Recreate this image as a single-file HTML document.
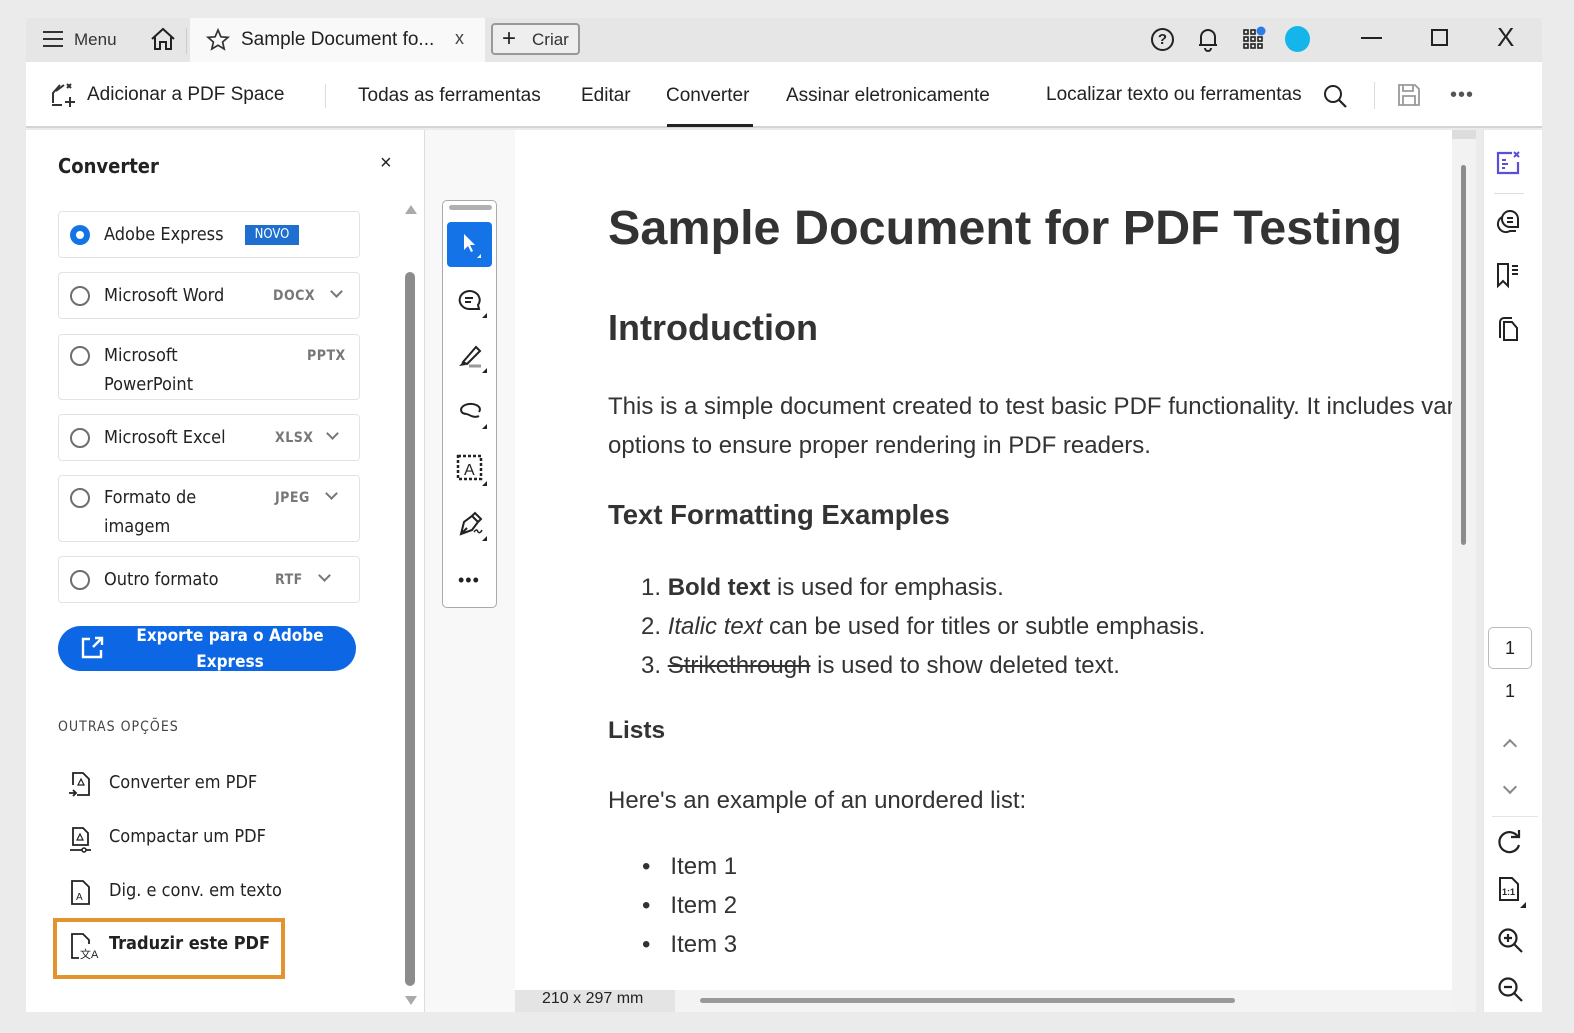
<!DOCTYPE html>
<html><head><meta charset="utf-8">
<style>
*{margin:0;padding:0;box-sizing:border-box}
body{width:1574px;height:1033px;background:#ebebeb;position:relative;overflow:hidden;font-family:"Liberation Sans",sans-serif;color:#222}
.a{position:absolute}
.t{white-space:nowrap}
.ui{font-family:"DejaVu Sans Condensed","Liberation Sans",sans-serif}
.opt{position:absolute;left:58px;width:302px;border:1px solid #e3e3e3;border-radius:4px;background:#fff}
.rad{position:absolute;left:11px;width:20px;height:20px;border:2px solid #6e6e6e;border-radius:50%}
.ol{position:absolute;left:45px;font-size:18px;color:#222;line-height:29px}
.fmt{position:absolute;font-size:14px;color:#777;font-weight:bold;letter-spacing:.5px}
.chev{position:absolute;width:9px;height:9px;border-right:2px solid #777;border-bottom:2px solid #777;transform:rotate(45deg)}
.doc{font-family:"Liberation Sans",sans-serif;color:#333}
svg{position:absolute;overflow:visible}
</style></head><body>
<!-- title bar -->
<div class="a" style="left:26px;top:18px;width:1516px;height:44px;background:#e6e6e6"></div>
<div class="a" style="left:190px;top:18px;width:295px;height:44px;background:#f9f9f9"></div>
<div class="a" style="left:26px;top:62px;width:1516px;height:66px;background:#fff;border-bottom:2px solid #d4d4d4"></div>
<!-- menu -->
<div class="a" style="left:43px;top:31px;width:20px;height:2px;background:#333;box-shadow:0 7px 0 #333,0 14px 0 #333"></div>
<div class="a t" style="left:74px;top:30px;font-size:17px;color:#333">Menu</div>
<svg style="left:150px;top:27px" width="26" height="24" viewBox="0 0 26 24"><path d="M2 12 L13 2 L24 12 M5 10 V22 H10 V15 H16 V22 H21 V10" fill="none" stroke="#222" stroke-width="2"/></svg>
<div class="a" style="left:186px;top:28px;width:1px;height:26px;background:#ccc"></div>
<svg style="left:206px;top:28px" width="24" height="24" viewBox="0 0 24 24"><path d="M12 2 L14.9 8.8 22 9.3 16.6 14 18.2 21 12 17.3 5.8 21 7.4 14 2 9.3 9.1 8.8Z" fill="none" stroke="#333" stroke-width="1.7"/></svg>
<div class="a t" style="left:241px;top:29px;font-size:19px;color:#222">Sample Document fo...</div>
<div class="a t" style="left:455px;top:28px;font-size:18px;color:#444">x</div>
<div class="a" style="left:491px;top:23px;width:89px;height:32px;border:2px solid #999;border-radius:4px;background:#eee"></div>
<div class="a t" style="left:502px;top:25px;font-size:24px;color:#222">+</div>
<div class="a t" style="left:532px;top:30px;font-size:17px;color:#333">Criar</div>
<!-- right title icons -->
<div class="a" style="left:1151px;top:28px;width:23px;height:23px;border:2px solid #222;border-radius:50%;font-size:15px;font-weight:bold;text-align:center;line-height:19px">?</div>
<svg style="left:1197px;top:26px" width="22" height="26" viewBox="0 0 22 26"><path d="M4 19 V11 a7 7 0 0 1 14 0 V19 H2 H20 M8 22 a3 3 0 0 0 6 0" fill="none" stroke="#222" stroke-width="2"/></svg>
<svg style="left:1243px;top:27px" width="24" height="24" viewBox="0 0 24 24"><g fill="none" stroke="#222" stroke-width="1.6"><rect x="1" y="3" width="4" height="4"/><rect x="8" y="3" width="4" height="4"/><rect x="1" y="10" width="4" height="4"/><rect x="8" y="10" width="4" height="4"/><rect x="15" y="10" width="4" height="4"/><rect x="1" y="17" width="4" height="4"/><rect x="8" y="17" width="4" height="4"/><rect x="15" y="17" width="4" height="4"/></g><circle cx="18" cy="4" r="4.5" fill="#2d7be5"/></svg>
<div class="a" style="left:1285px;top:26px;width:25px;height:26px;border-radius:50%;background:#14b5ea"></div>
<div class="a" style="left:1361px;top:37px;width:21px;height:2px;background:#222"></div>
<div class="a" style="left:1431px;top:29px;width:17px;height:17px;border:2px solid #222"></div>
<div class="a t" style="left:1497px;top:22px;font-size:26px;color:#222">X</div>
<!-- toolbar -->
<svg style="left:50px;top:81px" width="28" height="28" viewBox="0 0 28 28"><path d="M3 22 V12 L10 4 M6 10 L14 4 M2 24 H12" fill="none" stroke="#333" stroke-width="2"/><path d="M17 3 l4 4 M21 3 l-4 4 M20 16 v10 M15 21 h10" stroke="#333" stroke-width="2"/></svg>
<div class="a t" style="left:87px;top:84px;font-size:19px;color:#222">Adicionar a PDF Space</div>
<div class="a" style="left:325px;top:84px;width:1px;height:24px;background:#ddd"></div>
<div class="a t" style="left:358px;top:85px;font-size:19px;color:#222">Todas as ferramentas</div>
<div class="a t" style="left:581px;top:85px;font-size:19px;color:#222">Editar</div>
<div class="a t" style="left:666px;top:85px;font-size:19px;color:#222">Converter</div>
<div class="a" style="left:667px;top:124px;width:86px;height:3px;background:#222"></div>
<div class="a t" style="left:786px;top:85px;font-size:19px;color:#222">Assinar eletronicamente</div>
<div class="a t" style="left:1046px;top:84px;font-size:19px;color:#222">Localizar texto ou ferramentas</div>
<svg style="left:1323px;top:84px" width="24" height="24" viewBox="0 0 24 24"><circle cx="10" cy="10" r="8" fill="none" stroke="#222" stroke-width="2"/><path d="M16 16 L23 23" stroke="#222" stroke-width="2.2"/></svg>
<div class="a" style="left:1374px;top:82px;width:1px;height:27px;background:#ddd"></div>
<svg style="left:1397px;top:83px" width="24" height="24" viewBox="0 0 24 24"><path d="M2 2 H18 L22 6 V22 H2Z M6 2 V8 H16 V2 M6 22 V13 H18 V22" fill="none" stroke="#999" stroke-width="1.8"/></svg>
<div class="a t" style="left:1450px;top:84px;font-size:20px;color:#555;letter-spacing:1px">•••</div>
<!-- left panel -->
<div class="a" style="left:26px;top:130px;width:398px;height:882px;background:#fff"></div>
<div class="a" style="left:424px;top:130px;width:1px;height:882px;background:#ddd"></div>
<div class="a t ui" style="left:58px;top:154px;font-size:20px;font-weight:bold;color:#222">Converter</div>
<div class="a t" style="left:380px;top:152px;font-size:20px;color:#222">×</div>
<div class="opt" style="top:211px;height:47px"><div class="a" style="left:11px;top:13px;width:20px;height:20px;border-radius:50%;background:#1473e6"><div class="a" style="left:6px;top:6px;width:8px;height:8px;border-radius:50%;background:#fff"></div></div><div class="ol ui" style="top:8px">Adobe Express</div><div class="a ui" style="left:186px;top:13px;width:54px;height:20px;background:#1e6fd0;color:#fff;font-size:13px;text-align:center;line-height:20px">NOVO</div></div>
<div class="opt" style="top:272px;height:47px"><div class="rad" style="top:13px"></div><div class="ol ui" style="top:8px">Microsoft Word</div><div class="fmt ui" style="left:214px;top:15px">DOCX</div><div class="chev" style="left:273px;top:14px"></div></div>
<div class="opt" style="top:334px;height:66px"><div class="rad" style="top:11px"></div><div class="ol ui" style="top:6px">Microsoft<br>PowerPoint</div><div class="fmt ui" style="left:248px;top:13px">PPTX</div></div>
<div class="opt" style="top:414px;height:47px"><div class="rad" style="top:13px"></div><div class="ol ui" style="top:8px">Microsoft Excel</div><div class="fmt ui" style="left:216px;top:15px">XLSX</div><div class="chev" style="left:269px;top:14px"></div></div>
<div class="opt" style="top:475px;height:67px"><div class="rad" style="top:12px"></div><div class="ol ui" style="top:7px">Formato de<br>imagem</div><div class="fmt ui" style="left:216px;top:14px">JPEG</div><div class="chev" style="left:268px;top:13px"></div></div>
<div class="opt" style="top:556px;height:47px"><div class="rad" style="top:13px"></div><div class="ol ui" style="top:8px">Outro formato</div><div class="fmt ui" style="left:216px;top:15px">RTF</div><div class="chev" style="left:261px;top:14px"></div></div>
<div class="a" style="left:58px;top:626px;width:298px;height:45px;border-radius:23px;background:#0d66e4"></div>
<svg style="left:80px;top:634px" width="26" height="26" viewBox="0 0 26 26"><path d="M10 5 H3 V23 H21 V16 M13 13 L22 4 M15 4 H22 V11" fill="none" stroke="#fff" stroke-width="2.4"/></svg>
<div class="a ui" style="left:120px;top:623px;width:220px;text-align:center;color:#fff;font-weight:bold;font-size:17px;line-height:26px">Exporte para o Adobe<br>Express</div>
<div class="a t ui" style="left:58px;top:719px;font-size:14px;color:#444;letter-spacing:1px">OUTRAS OPÇÕES</div>
<svg style="left:68px;top:771px" width="24" height="28" viewBox="0 0 24 28"><path d="M5 14 V2 H15 L21 8 V24 H9" fill="none" stroke="#222" stroke-width="1.8"/><path d="M1 22 H8 M5 19 l3 3 -3 3" fill="none" stroke="#222" stroke-width="1.8"/><path d="M10 14 l3-6 3 6z" fill="none" stroke="#222" stroke-width="1.2"/></svg>
<div class="a t ui" style="left:109px;top:772px;font-size:18px;color:#222">Converter em PDF</div>
<svg style="left:68px;top:826px" width="26" height="28" viewBox="0 0 26 28"><path d="M5 19 V2 H15 L20 7 V19Z" fill="none" stroke="#222" stroke-width="1.8"/><path d="M2 24 H23" stroke="#222" stroke-width="1.8"/><circle cx="16" cy="24" r="2" fill="#fff" stroke="#222" stroke-width="1.5"/><path d="M9 14 l3-6 3 6z" fill="none" stroke="#222" stroke-width="1.2"/></svg>
<div class="a t ui" style="left:109px;top:826px;font-size:18px;color:#222">Compactar um PDF</div>
<svg style="left:70px;top:879px" width="24" height="28" viewBox="0 0 24 28"><path d="M2 2 H13 L19 8 V25 H2Z" fill="none" stroke="#222" stroke-width="1.8"/><text x="6" y="21" font-family="Liberation Sans" font-size="10" fill="#222">A</text></svg>
<div class="a t ui" style="left:109px;top:880px;font-size:18px;color:#222">Dig. e conv. em texto</div>
<div class="a" style="left:53px;top:918px;width:232px;height:61px;border:4px solid #e3932f"></div>
<svg style="left:70px;top:932px" width="28" height="30" viewBox="0 0 28 30"><path d="M9 26 H2 V2 H13 L19 8 V12" fill="none" stroke="#222" stroke-width="1.8"/><text x="10" y="26" font-family="Liberation Sans" font-size="11" fill="#222">文A</text></svg>
<div class="a t ui" style="left:109px;top:933px;font-size:18px;font-weight:bold;color:#222">Traduzir este PDF</div>
<!-- left scrollbar -->
<div class="a" style="left:405px;top:205px;width:0;height:0;border-left:6px solid transparent;border-right:6px solid transparent;border-bottom:9px solid #aaa"></div>
<div class="a" style="left:405px;top:272px;width:10px;height:714px;border-radius:5px;background:#8c8c8c"></div>
<div class="a" style="left:405px;top:996px;width:0;height:0;border-left:6px solid transparent;border-right:6px solid transparent;border-top:9px solid #aaa"></div>
<!-- tool strip area -->
<div class="a" style="left:425px;top:130px;width:90px;height:882px;background:#f8f8f8"></div>
<div class="a" style="left:442px;top:200px;width:55px;height:408px;border:1.5px solid #aaa;border-radius:5px;background:#fff"></div>
<div class="a" style="left:449px;top:205px;width:43px;height:5px;border-radius:3px;background:#b0b0b0"></div>
<div class="a" style="left:447px;top:222px;width:45px;height:45px;border-radius:4px;background:#1473e6"></div>
<svg style="left:461px;top:232px" width="22" height="26" viewBox="0 0 22 26"><path d="M3 2 V18 L7 14 L10 20 L12 19 L9 13 H14Z" fill="#fff"/><path d="M20 22 V26 H16Z" fill="#fff"/></svg>
<svg style="left:457px;top:287px" width="32" height="32" viewBox="0 0 32 32"><path d="M12 22 A10 9 0 1 1 21 18 L22 22Z" fill="none" stroke="#222" stroke-width="2"/><path d="M8 11 H16 M8 15 H14" stroke="#222" stroke-width="2"/><path d="M30 26 V31 H25Z" fill="#222"/></svg>
<svg style="left:457px;top:342px" width="32" height="32" viewBox="0 0 32 32"><path d="M6 20 L19 5 L23 9 L10 22Z" fill="none" stroke="#222" stroke-width="2"/><path d="M2 24 L6 20 L9 23Z" fill="#222"/><path d="M12 24 H24" stroke="#999" stroke-width="3"/><path d="M30 26 V31 H25Z" fill="#222"/></svg>
<svg style="left:457px;top:398px" width="32" height="32" viewBox="0 0 32 32"><path d="M22 14 C26 8 16 4 8 7 C2 10 3 16 10 16 M10 16 C14 18 18 20 22 18" fill="none" stroke="#222" stroke-width="2"/><path d="M30 26 V31 H25Z" fill="#222"/></svg>
<svg style="left:457px;top:455px" width="32" height="32" viewBox="0 0 32 32"><rect x="1" y="1" width="23" height="23" fill="none" stroke="#222" stroke-width="2.5" stroke-dasharray="3 2"/><text x="7" y="20" font-family="Liberation Sans" font-size="16" fill="#222">A</text><path d="M30 26 V31 H25Z" fill="#222"/></svg>
<svg style="left:457px;top:510px" width="32" height="32" viewBox="0 0 32 32"><path d="M4 24 L7 12 L15 6 L21 12 L15 20Z M15 6 L18 3 L24 9 L21 12 M4 24 L10 18" fill="none" stroke="#222" stroke-width="2"/><path d="M17 22 q3-4 4 0 q2 2 4-2" fill="none" stroke="#222" stroke-width="1.5"/><path d="M30 26 V31 H25Z" fill="#222"/></svg>
<div class="a t" style="left:458px;top:570px;font-size:18px;color:#222;letter-spacing:1px">•••</div>
<!-- document -->
<div class="a" style="left:515px;top:130px;width:937px;height:860px;background:#fff;overflow:hidden">
<div class="a t doc" style="left:93px;top:70px;font-size:48.5px;font-weight:bold">Sample Document for PDF Testing</div>
<div class="a t doc" style="left:93px;top:177px;font-size:36px;font-weight:bold">Introduction</div>
<div class="a t doc" style="left:93px;top:257px;font-size:24px;line-height:39px">This is a simple document created to test basic PDF functionality. It includes various<br>options to ensure proper rendering in PDF readers.</div>
<div class="a t doc" style="left:93px;top:369px;font-size:27.5px;font-weight:bold">Text Formatting Examples</div>
<div class="a t doc" style="left:126px;top:438px;font-size:24px;line-height:39px">1. <b>Bold text</b> is used for emphasis.<br>2. <i>Italic text</i> can be used for titles or subtle emphasis.<br>3. <s>Strikethrough</s> is used to show deleted text.</div>
<div class="a t doc" style="left:93px;top:587px;font-size:24.5px;font-weight:bold">Lists</div>
<div class="a t doc" style="left:93px;top:657px;font-size:24px">Here's an example of an unordered list:</div>
<div class="a t doc" style="left:127px;top:717px;font-size:24px;line-height:39px">•&nbsp;&nbsp;&nbsp;Item 1<br>•&nbsp;&nbsp;&nbsp;Item 2<br>•&nbsp;&nbsp;&nbsp;Item 3</div>
</div>
<!-- bottom bar -->
<div class="a" style="left:515px;top:990px;width:937px;height:22px;background:#f3f3f3"></div>
<div class="a" style="left:515px;top:990px;width:160px;height:22px;background:#e4e4e4"></div>
<div class="a t" style="left:542px;top:990px;font-size:16px;color:#222">210 x 297 mm</div>
<div class="a" style="left:700px;top:998px;width:535px;height:5px;border-radius:3px;background:#999"></div>
<!-- vertical scrollbar -->
<div class="a" style="left:1452px;top:130px;width:24px;height:882px;background:#f2f2f2"></div>
<div class="a" style="left:1452px;top:130px;width:24px;height:9px;background:#ddd"></div>
<div class="a" style="left:1461px;top:165px;width:5px;height:380px;border-radius:3px;background:#8c8c8c"></div>
<!-- right rail -->
<div class="a" style="left:1483px;top:130px;width:59px;height:882px;background:#fff;border-left:1px solid #e6e6e6"></div>
<svg style="left:1496px;top:150px" width="26" height="26" viewBox="0 0 26 26"><path d="M16 3 H2 V23 H22 V12" fill="none" stroke="#5b4fd6" stroke-width="2.2"/><path d="M6 10 H10 M6 14 H12 M6 18 H9" stroke="#5b4fd6" stroke-width="2"/><path d="M18 2 l5 5 M23 2 l-5 5" stroke="#5b4fd6" stroke-width="2"/></svg>
<div class="a" style="left:1494px;top:193px;width:30px;height:1px;background:#ddd"></div>
<svg style="left:1496px;top:208px" width="26" height="26" viewBox="0 0 26 26"><path d="M14 3 a8 8 0 0 1 8 8 V19 H14 a8 8 0 0 1 0-16Z" fill="none" stroke="#222" stroke-width="2"/><path d="M11 10 H17 M11 14 H17" stroke="#222" stroke-width="2"/><path d="M6 9 a8 8 0 0 0 8 14 H20" fill="none" stroke="#222" stroke-width="2"/></svg>
<svg style="left:1496px;top:262px" width="26" height="26" viewBox="0 0 26 26"><path d="M2 2 H12 V24 L7 19 L2 24Z" fill="none" stroke="#222" stroke-width="2"/><path d="M16 4 H22 M16 8 H22 M16 12 H22" stroke="#222" stroke-width="2"/></svg>
<svg style="left:1496px;top:316px" width="26" height="26" viewBox="0 0 26 26"><path d="M8 2 H16 M4 6 V22 M8 24 H21 V12 L16 6 H8Z" fill="none" stroke="#222" stroke-width="2"/><path d="M4 6 a4 4 0 0 1 4-4" fill="none" stroke="#222" stroke-width="2"/></svg>
<div class="a" style="left:1488px;top:627px;width:44px;height:42px;border:1px solid #bbb;border-radius:5px;text-align:center;line-height:40px;font-size:18px;color:#222">1</div>
<div class="a t" style="left:1505px;top:681px;font-size:18px;color:#222">1</div>
<div class="a" style="left:1505px;top:741px;width:10px;height:10px;border-left:2.5px solid #888;border-top:2.5px solid #888;transform:rotate(45deg)"></div>
<div class="a" style="left:1505px;top:782px;width:10px;height:10px;border-right:2.5px solid #888;border-bottom:2.5px solid #888;transform:rotate(45deg)"></div>
<div class="a" style="left:1492px;top:816px;width:46px;height:1px;background:#e4e4e4"></div>
<svg style="left:1497px;top:829px" width="26" height="26" viewBox="0 0 26 26"><path d="M21 8 A10 10 0 1 0 22 16" fill="none" stroke="#222" stroke-width="2.2"/><path d="M14 8 H22 V1" fill="none" stroke="#222" stroke-width="2.2"/></svg>
<svg style="left:1498px;top:876px" width="30" height="34" viewBox="0 0 30 34"><path d="M2 2 H14 L20 8 V24 H2Z" fill="none" stroke="#222" stroke-width="2"/><text x="4" y="19" font-family="Liberation Sans" font-size="9" font-weight="bold" fill="#222">1:1</text><path d="M28 26 V32 H22Z" fill="#222"/></svg>
<svg style="left:1497px;top:927px" width="28" height="28" viewBox="0 0 28 28"><circle cx="11" cy="11" r="8.5" fill="none" stroke="#222" stroke-width="2.2"/><path d="M17 17 L25 25 M7 11 H15 M11 7 V15" stroke="#222" stroke-width="2.2"/></svg>
<svg style="left:1497px;top:976px" width="28" height="28" viewBox="0 0 28 28"><circle cx="11" cy="11" r="8.5" fill="none" stroke="#222" stroke-width="2.2"/><path d="M17 17 L25 25 M7 11 H15" stroke="#222" stroke-width="2.2"/></svg>
</body></html>
